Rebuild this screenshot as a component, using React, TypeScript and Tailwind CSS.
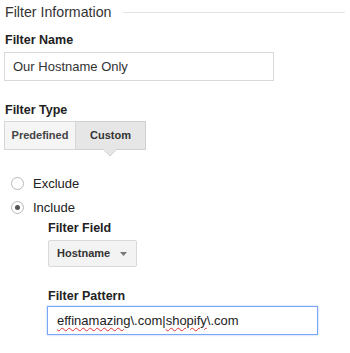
export default function App() {
  return (
    <div className="w-[350px] h-[353px] bg-white text-[#222] font-['Liberation_Sans',Arial,sans-serif] overflow-hidden">
      {/* section heading */}
      <div className="flex items-center pl-[5px] pr-[5px] pt-[3px]">
        <span className="text-[14.2px] leading-[18px] text-[#333]">Filter Information</span>
        <div className="flex-1 h-px bg-[#e3e3e3] ml-[12px] mt-[1px]" />
      </div>

      <div className="pl-[5px] mt-[11px] text-[12.5px] leading-[16px] font-bold">Filter Name</div>
      <div className="pl-[4px] mt-[4px]">
        <div className="w-[270px] h-[29px] border border-[#d9d9d9] flex items-center pl-[8px] text-[13px] text-[#333]">
          Our Hostname Only
        </div>
      </div>

      <div className="pl-[5px] mt-[21px] text-[12.5px] leading-[16px] font-bold">Filter Type</div>
      <div className="pl-[4px] mt-[3px] flex">
        <div className="w-[72px] h-[29px] border border-[#d6d6d6] bg-[#f5f5f5] flex items-center justify-center text-[11px] font-bold text-[#444]">
          Predefined
        </div>
        <div className="relative w-[70px] h-[29px] border border-l-0 border-[#d0d0d0] bg-[#e6e6e6] flex items-center justify-center text-[11px] font-bold text-[#333]">
          Custom
          <svg className="absolute left-[28px] top-[27px]" width="12" height="8" viewBox="0 0 12 8">
            <path d="M0 1 L6 7 L12 1" fill="#e6e6e6" stroke="#d0d0d0" strokeWidth="1" />
            <rect x="0" y="0" width="12" height="1.2" fill="#e6e6e6" />
          </svg>
        </div>
      </div>

      {/* radios */}
      <div className="mt-[27px] pl-[11px] flex flex-col gap-[11px]">
        <div className="flex items-center h-[13px]">
          <span className="w-[13px] h-[13px] rounded-full border border-[#b8b8b8] bg-white" />
          <span className="ml-[9px] text-[13px] text-[#222]">Exclude</span>
        </div>
        <div className="flex items-center h-[13px]">
          <span className="w-[13px] h-[13px] rounded-full border border-[#b8b8b8] bg-white flex items-center justify-center">
            <span className="w-[5px] h-[5px] rounded-full bg-[#555]" />
          </span>
          <span className="ml-[9px] text-[13px] text-[#222]">Include</span>
        </div>
      </div>

      <div className="pl-[48px]">
        <div className="mt-[6px] text-[12.5px] leading-[16px] font-bold">Filter Field</div>
        <div className="mt-[4px] w-[89px] h-[27px] border border-[#d9d9d9] bg-[#f3f3f3] rounded-[2px] flex items-center pl-[8px] pr-[9px] text-[11px] font-bold text-[#333]">
          <span className="flex-1">Hostname</span>
          <svg width="7" height="4" viewBox="0 0 7 4">
            <path d="M0 0 L7 0 L3.5 4 Z" fill="#777" />
          </svg>
        </div>

        <div className="mt-[21px] text-[12.5px] leading-[16px] font-bold">Filter Pattern</div>
        <div className="mt-[2px] -ml-px w-[271px] h-[29px] border border-[#7aa7f5] shadow-[0_0_2px_#a8c6fb] flex items-center pl-[9px] text-[13px] text-[#222]">
          <span className="underline decoration-wavy decoration-[#e03030] decoration-1 underline-offset-2">effinamazing</span>
          <span>\.com|</span>
          <span className="underline decoration-wavy decoration-[#e03030] decoration-1 underline-offset-2">shopify</span>
          <span>\.com</span>
        </div>
      </div>
    </div>
  );
}
